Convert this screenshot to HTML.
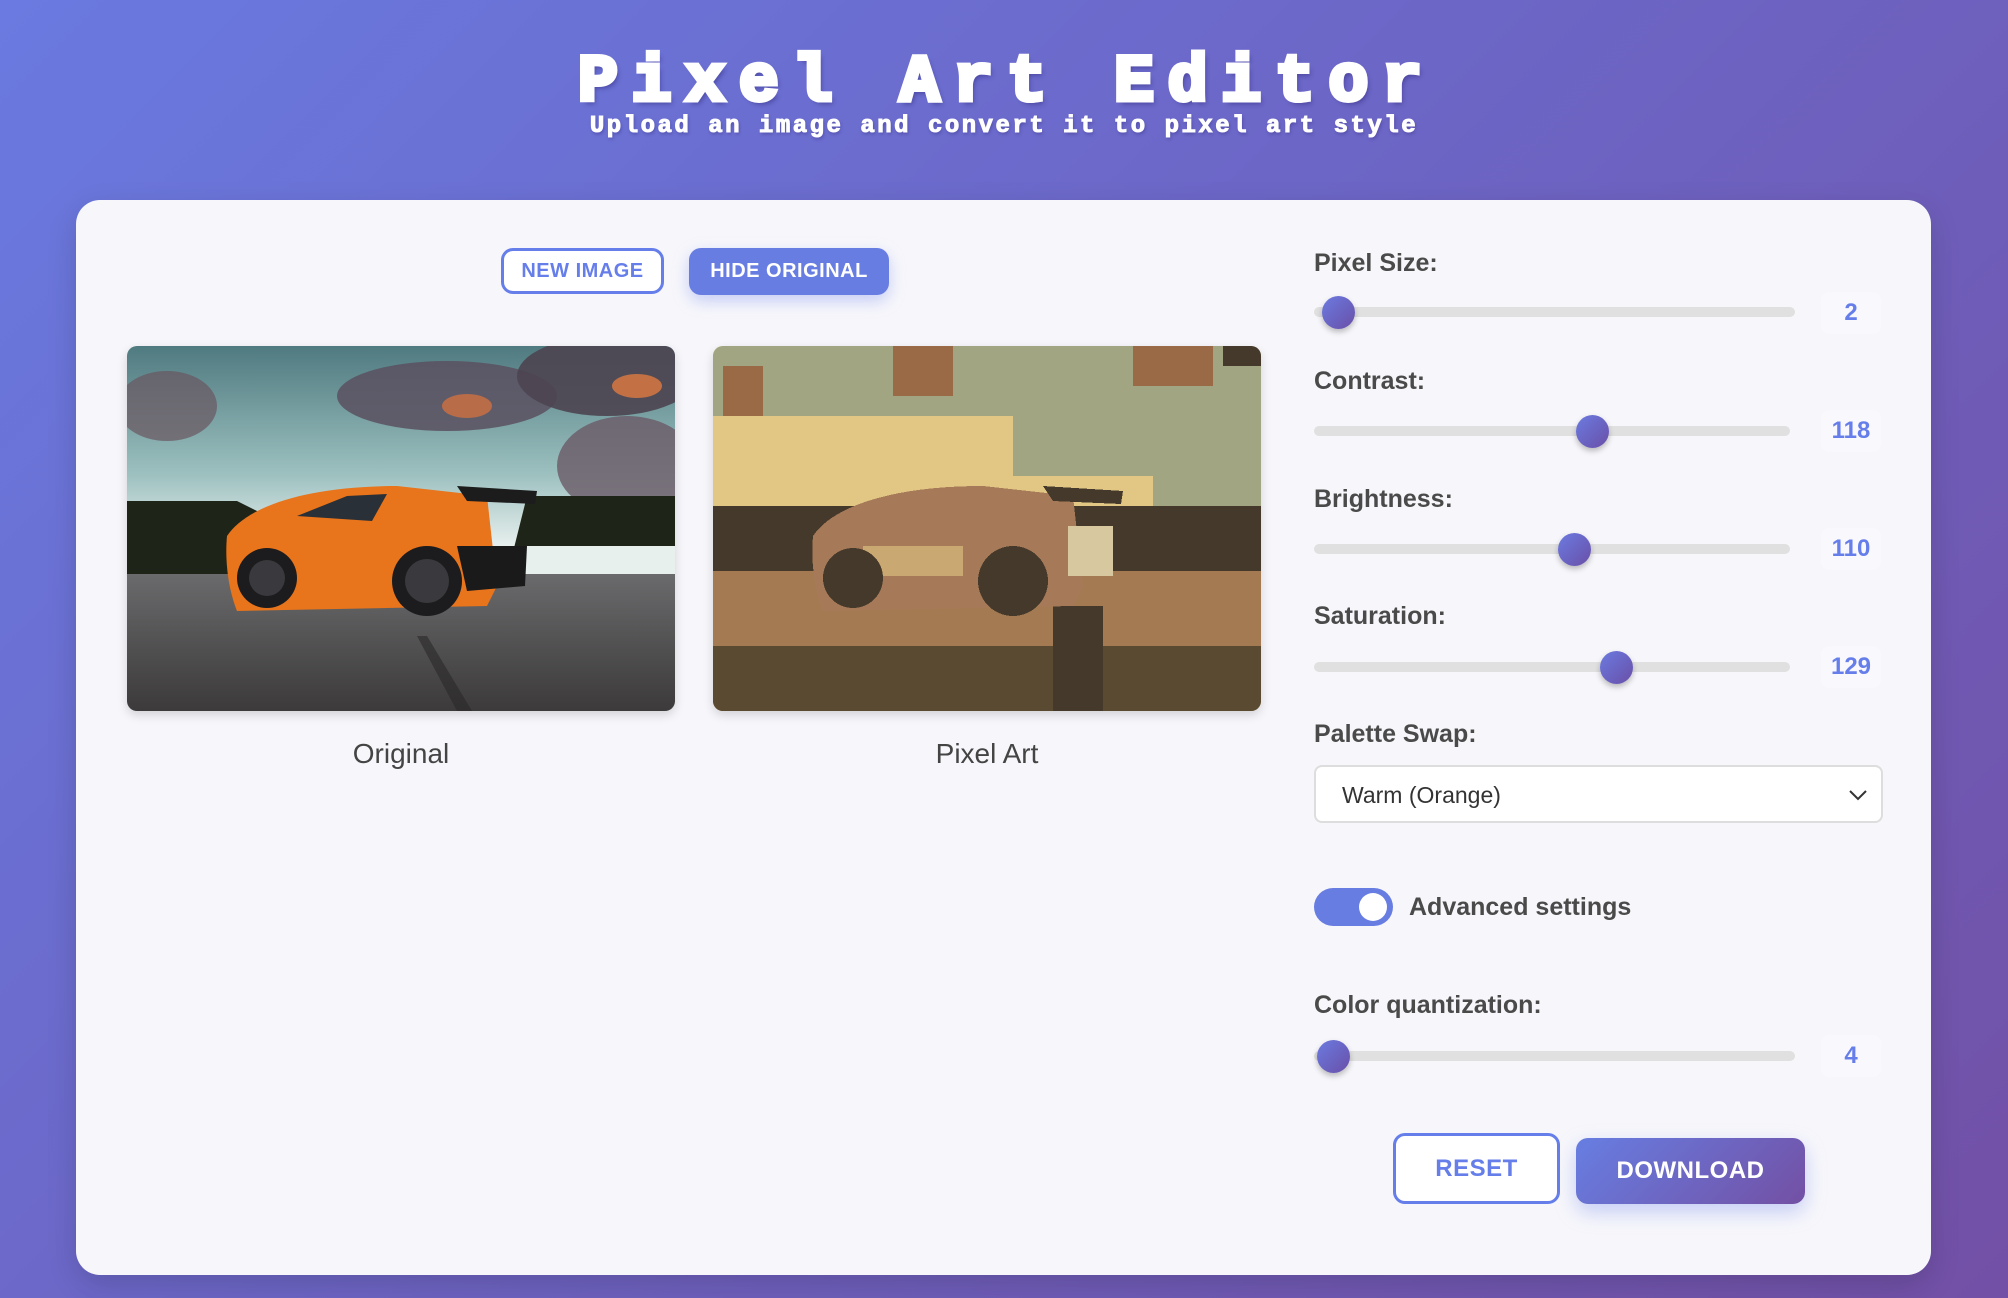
<!DOCTYPE html>
<html><head><meta charset="utf-8"><style>
*{margin:0;padding:0;box-sizing:border-box}
body{width:2008px;height:1298px;overflow:hidden;background:linear-gradient(135deg,#6a7ae0 0%,#6c66c6 45%,#7250a6 100%);font-family:"Liberation Sans",sans-serif;position:relative}
.abs{position:absolute}
h1{position:absolute;left:0;width:2008px;top:51px;text-align:center;font:bold 66px/64px "Liberation Mono",monospace;color:#fff;-webkit-text-stroke:5px #fff;text-shadow:3px 4px 5px rgba(40,30,110,.45);letter-spacing:14px;padding-left:6px}
.sub{position:absolute;left:0;width:2008px;top:112px;text-align:center;font:bold 24px/30px "Liberation Mono",monospace;color:#fff;-webkit-text-stroke:1px #fff;letter-spacing:2.5px;text-shadow:1px 2px 3px rgba(40,30,110,.4)}
.card{position:absolute;left:76px;top:200px;width:1855px;height:1075px;background:#f7f7fb;border-radius:24px;box-shadow:0 10px 30px rgba(0,0,0,.15)}
.btn{position:absolute;border-radius:12px;font-weight:bold;font-size:20px;display:flex;align-items:center;justify-content:center;letter-spacing:.5px}
.lbl{position:absolute;left:1314px;font-weight:bold;font-size:25px;color:#4a4a4a}
.track{position:absolute;left:1314px;height:10px;border-radius:5px;background:#e0e0e0}
.thumb{position:absolute;width:33px;height:33px;border-radius:50%;background:linear-gradient(135deg,#6b7be0,#6a4fa8);box-shadow:0 3px 6px rgba(0,0,0,.25)}
.val{position:absolute;width:60px;height:42px;left:1821px;background:#f9f9fd;border-radius:8px;color:#667eea;font-weight:bold;font-size:24px;display:flex;align-items:center;justify-content:center}
.cap{position:absolute;font-size:28px;color:#444;text-align:center;width:548px}
.img{position:absolute;top:346px;width:548px;height:365px;border-radius:10px;overflow:hidden;box-shadow:0 4px 10px rgba(0,0,0,.15)}
</style></head><body>
<h1>Pixel Art Editor</h1>
<div class="sub">Upload an image and convert it to pixel art style</div>
<div class="card"></div>
<div class="btn" style="left:501px;top:248px;width:163px;height:46px;border:3px solid #667eea;color:#667eea;background:#fff">NEW IMAGE</div>
<div class="btn" style="left:689px;top:248px;width:200px;height:47px;background:#687de2;color:#fff;box-shadow:0 6px 16px rgba(102,126,234,.35)">HIDE ORIGINAL</div>

<div class="img" style="left:127px">
<svg width="548" height="365" viewBox="0 0 548 365">
<defs><linearGradient id="sk" x1="0" y1="0" x2="0" y2="1"><stop offset="0" stop-color="#4f7a80"/><stop offset=".35" stop-color="#9cc0bf"/><stop offset=".55" stop-color="#e8f0ee"/></linearGradient>
<linearGradient id="rd" x1="0" y1="0" x2="0" y2="1"><stop offset="0" stop-color="#6a6a6c"/><stop offset="1" stop-color="#3c3a3a"/></linearGradient></defs>
<rect width="548" height="365" fill="url(#sk)"/>
<ellipse cx="320" cy="50" rx="110" ry="35" fill="#5a5060" opacity=".85"/>
<ellipse cx="480" cy="30" rx="90" ry="40" fill="#4c4450" opacity=".9"/>
<ellipse cx="500" cy="120" rx="70" ry="50" fill="#6a5a66" opacity=".8"/>
<ellipse cx="40" cy="60" rx="50" ry="35" fill="#6a5560" opacity=".7"/>
<ellipse cx="340" cy="60" rx="25" ry="12" fill="#d07040" opacity=".8"/>
<ellipse cx="510" cy="40" rx="25" ry="12" fill="#e07a40" opacity=".8"/>
<path d="M0 155 L110 155 L150 175 L180 200 L548 200 L548 150 L400 150 L380 230 L0 230Z" fill="#1e2418"/>
<rect y="228" width="548" height="137" fill="url(#rd)"/>
<path d="M290 290 L330 365 L345 365 L300 290Z" fill="#2a2828" opacity=".6"/>
<path d="M100 190 C120 160 180 140 270 140 L360 150 L370 240 L360 260 L110 265 C100 240 98 210 100 190Z" fill="#e8741c"/>
<path d="M170 170 L220 150 L260 148 L245 175Z" fill="#2a3038"/>
<path d="M330 140 L410 145 L408 158 L340 155Z" fill="#1c1c1c"/>
<circle cx="140" cy="232" r="30" fill="#1c1c1e"/><circle cx="300" cy="235" r="35" fill="#1c1c1e"/>
<circle cx="140" cy="232" r="18" fill="#3a3a3e"/><circle cx="300" cy="235" r="22" fill="#3a3a3e"/>
<path d="M330 200 L400 200 L398 240 L340 245Z" fill="#1a1a1a"/>
</svg></div>
<div class="img" style="left:713px">
<svg width="548" height="365" viewBox="0 0 548 365" shape-rendering="crispEdges">
<rect width="548" height="365" fill="#e2c683"/>
<rect width="548" height="70" fill="#a2a582"/>
<rect x="300" y="60" width="248" height="70" fill="#a2a582"/>
<rect x="440" y="120" width="108" height="40" fill="#a2a582"/>
<rect x="180" y="0" width="60" height="50" fill="#9a6a46"/>
<rect x="420" y="0" width="80" height="40" fill="#9a6a46"/>
<rect x="510" y="0" width="38" height="20" fill="#44392a"/>
<rect x="10" y="20" width="40" height="50" fill="#9a6a46"/>
<rect x="0" y="160" width="548" height="70" fill="#44392a"/>
<rect x="0" y="225" width="548" height="140" fill="#a47a52"/>
<rect x="0" y="300" width="548" height="65" fill="#5a4a32"/>
<rect x="340" y="260" width="50" height="105" fill="#44392a"/>
<path d="M100 190 C120 160 180 140 270 140 L360 150 L370 240 L360 260 L110 265 C100 240 98 210 100 190Z" fill="#a67a58"/>
<rect x="150" y="200" width="100" height="30" fill="#e2c683" opacity=".6"/>
<path d="M330 140 L410 145 L408 158 L340 155Z" fill="#44392a"/>
<circle cx="140" cy="232" r="30" fill="#44392a"/><circle cx="300" cy="235" r="35" fill="#44392a"/>
<rect x="355" y="180" width="45" height="50" fill="#d8c8a0"/>
</svg></div>
<div class="cap" style="left:127px;top:738px">Original</div>
<div class="cap" style="left:713px;top:738px">Pixel Art</div>

<div class="lbl" style="top:249px">Pixel Size:</div>
<div class="track" style="top:307px;width:481px"></div>
<div class="thumb" style="left:1322px;top:296px"></div>
<div class="val" style="top:292px">2</div>

<div class="lbl" style="top:367px">Contrast:</div>
<div class="track" style="top:426px;width:476px"></div>
<div class="thumb" style="left:1576px;top:415px"></div>
<div class="val" style="top:410px">118</div>

<div class="lbl" style="top:485px">Brightness:</div>
<div class="track" style="top:544px;width:476px"></div>
<div class="thumb" style="left:1558px;top:533px"></div>
<div class="val" style="top:528px">110</div>

<div class="lbl" style="top:602px">Saturation:</div>
<div class="track" style="top:662px;width:476px"></div>
<div class="thumb" style="left:1600px;top:651px"></div>
<div class="val" style="top:646px">129</div>

<div class="lbl" style="top:720px">Palette Swap:</div>
<div class="abs" style="left:1314px;top:765px;width:569px;height:58px;border:2px solid #ddd;border-radius:8px;background:#fff;font-size:23px;color:#333;padding:15px 0 0 26px">Warm (Orange)
<svg class="abs" style="right:14px;top:23px" width="18" height="11" viewBox="0 0 18 11"><path d="M1 1 L9 9 L17 1" fill="none" stroke="#333" stroke-width="2"/></svg></div>

<div class="abs" style="left:1314px;top:888px;width:79px;height:38px;border-radius:19px;background:#687de2"><div class="abs" style="left:45px;top:5px;width:28px;height:28px;border-radius:50%;background:#fff"></div></div>
<div class="lbl" style="left:1409px;top:893px;font-size:25px">Advanced settings</div>

<div class="lbl" style="top:991px">Color quantization:</div>
<div class="track" style="top:1051px;width:481px"></div>
<div class="thumb" style="left:1317px;top:1040px"></div>
<div class="val" style="top:1035px">4</div>

<div class="btn" style="left:1393px;top:1133px;width:167px;height:71px;border:3px solid #667eea;color:#667eea;background:#fff;font-size:24px">RESET</div>
<div class="btn" style="left:1576px;top:1138px;width:229px;height:66px;background:linear-gradient(135deg,#677ee2,#7350a4);color:#fff;font-size:24px;box-shadow:0 8px 20px rgba(102,126,234,.35)">DOWNLOAD</div>
</body></html>
